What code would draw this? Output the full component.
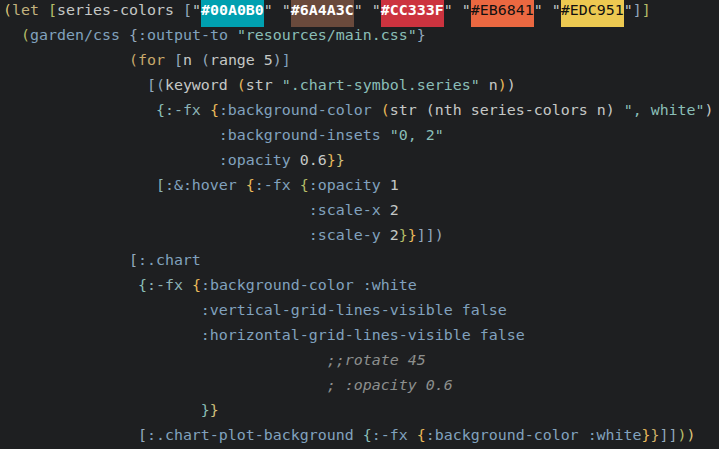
import React from "react";

const Y = "text-[#dcc57a]";
const LET = "text-[#c2b27e]";
const FOR = "text-[#c9aa6c]";
const G = "text-[#b5bd68]";
const B = "text-[#81a2be]";
const BG = "text-[#93a8bd]";
const T = "text-[#8abeb7]";
const FX = "text-[#8cb3b6]";
const W = "text-[#c5c8c6]";
const O = "text-[#e8b95a]";
const Q = "text-[#c0c8c6]";
const C = "text-[#8d8f8e] italic";

const sp = (n) => [" ".repeat(n), W];

function Hl({ text, bg, dark }) {
  return (
    <span
      className={`${bg} ${dark ? "text-[#111111]" : "text-white font-bold"} pt-[6px] pb-[8px]`}
    >
      {text}
    </span>
  );
}

const lines = [
  [
    ["(", Y], ["let", LET], sp(1), ["[", G], ["series-colors", W], sp(1), ["[", BG],
    ['"', Q], { hl: "#00A0B0", bg: "bg-[#00A0B0]" }, ['"', Q], sp(1),
    ['"', Q], { hl: "#6A4A3C", bg: "bg-[#6A4A3C]" }, ['"', Q], sp(1),
    ['"', Q], { hl: "#CC333F", bg: "bg-[#CC333F]" }, ['"', Q], sp(1),
    ['"', Q], { hl: "#EB6841", bg: "bg-[#EB6841]", dark: true }, ['"', Q], sp(1),
    ['"', Q], { hl: "#EDC951", bg: "bg-[#EDC951]", dark: true }, ['"', Q],
    ["]", BG], ["]", G],
  ],
  [
    sp(2), ["(", G], ["garden/css", B], sp(1), ["{", BG], [":output-to", B], sp(1),
    ['"resources/main.css"', T], ["}", BG],
  ],
  [
    sp(14), ["(", FOR], ["for", FOR], sp(1), ["[", BG], ["n", W], sp(1), ["(", BG],
    ["range", W], sp(1), ["5", W], [")", BG], ["]", B],
  ],
  [
    sp(16), ["[", BG], ["(", BG], ["keyword", W], sp(1), ["(", O], ["str", W], sp(1),
    ['".chart-symbol.series"', T], sp(1), ["n", W], [")", O], [")", W],
  ],
  [
    sp(17), ["{", T], [":-fx", FX], sp(1), ["{", O], [":background-color", B], sp(1),
    ["(", O], ["str", W], sp(1), ["(", W], ["nth", W], sp(1), ["series-colors", W], sp(1),
    ["n", W], [")", W], sp(1), ['", white"', T], [")", W],
  ],
  [sp(24), [":background-insets", B], sp(1), ['"0, 2"', T]],
  [sp(24), [":opacity", B], sp(1), ["0.6", W], ["}", O], ["}", "text-[#d2c07c]"]],
  [
    sp(17), ["[", FX], [":&:hover", B], sp(1), ["{", O], [":-fx", B], sp(1), ["{", G],
    [":opacity", B], sp(1), ["1", W],
  ],
  [sp(34), [":scale-x", B], sp(1), ["2", W]],
  [
    sp(34), [":scale-y", B], sp(1), ["2", W], ["}", G], ["}", O], ["]", BG], ["]", BG],
    [")", BG],
  ],
  [sp(14), ["[", BG], [":.chart", B]],
  [
    sp(15), ["{", T], [":-fx", FX], sp(1), ["{", O], [":background-color", B], sp(1),
    [":white", B],
  ],
  [sp(22), [":vertical-grid-lines-visible", B], sp(1), ["false", B]],
  [sp(22), [":horizontal-grid-lines-visible", B], sp(1), ["false", B]],
  [sp(36), [";;rotate 45", C]],
  [sp(36), ["; :opacity 0.6", C]],
  [sp(22), ["}", T], ["}", "text-[#d2c07c]"]],
  [
    sp(15), ["[", BG], [":.chart-plot-background", B], sp(1), ["{", T], [":-fx", B],
    sp(1), ["{", O], [":background-color", B], sp(1), [":white", B], ["}", O],
    ["}", "text-[#d2b26a]"], ["]", BG], ["]", BG], [")", G], [")", Y],
  ],
];

export default function App() {
  return (
    <div className="w-[719px] h-[449px] overflow-hidden bg-[#1e1f21]">
      <div
        className="-mt-[2px] pl-[3px] whitespace-pre text-[14.95px] leading-[25px] text-[#c5c8c6]"
        style={{ fontFamily: '"DejaVu Sans Mono", "Liberation Mono", monospace' }}
      >
        {lines.map((line, i) => (
          <div key={i} className="h-[25px]">
            {line.map((tok, j) =>
              Array.isArray(tok) ? (
                <span key={j} className={tok[1]}>
                  {tok[0]}
                </span>
              ) : (
                <Hl key={j} text={tok.hl} bg={tok.bg} dark={tok.dark} />
              )
            )}
          </div>
        ))}
      </div>
    </div>
  );
}
